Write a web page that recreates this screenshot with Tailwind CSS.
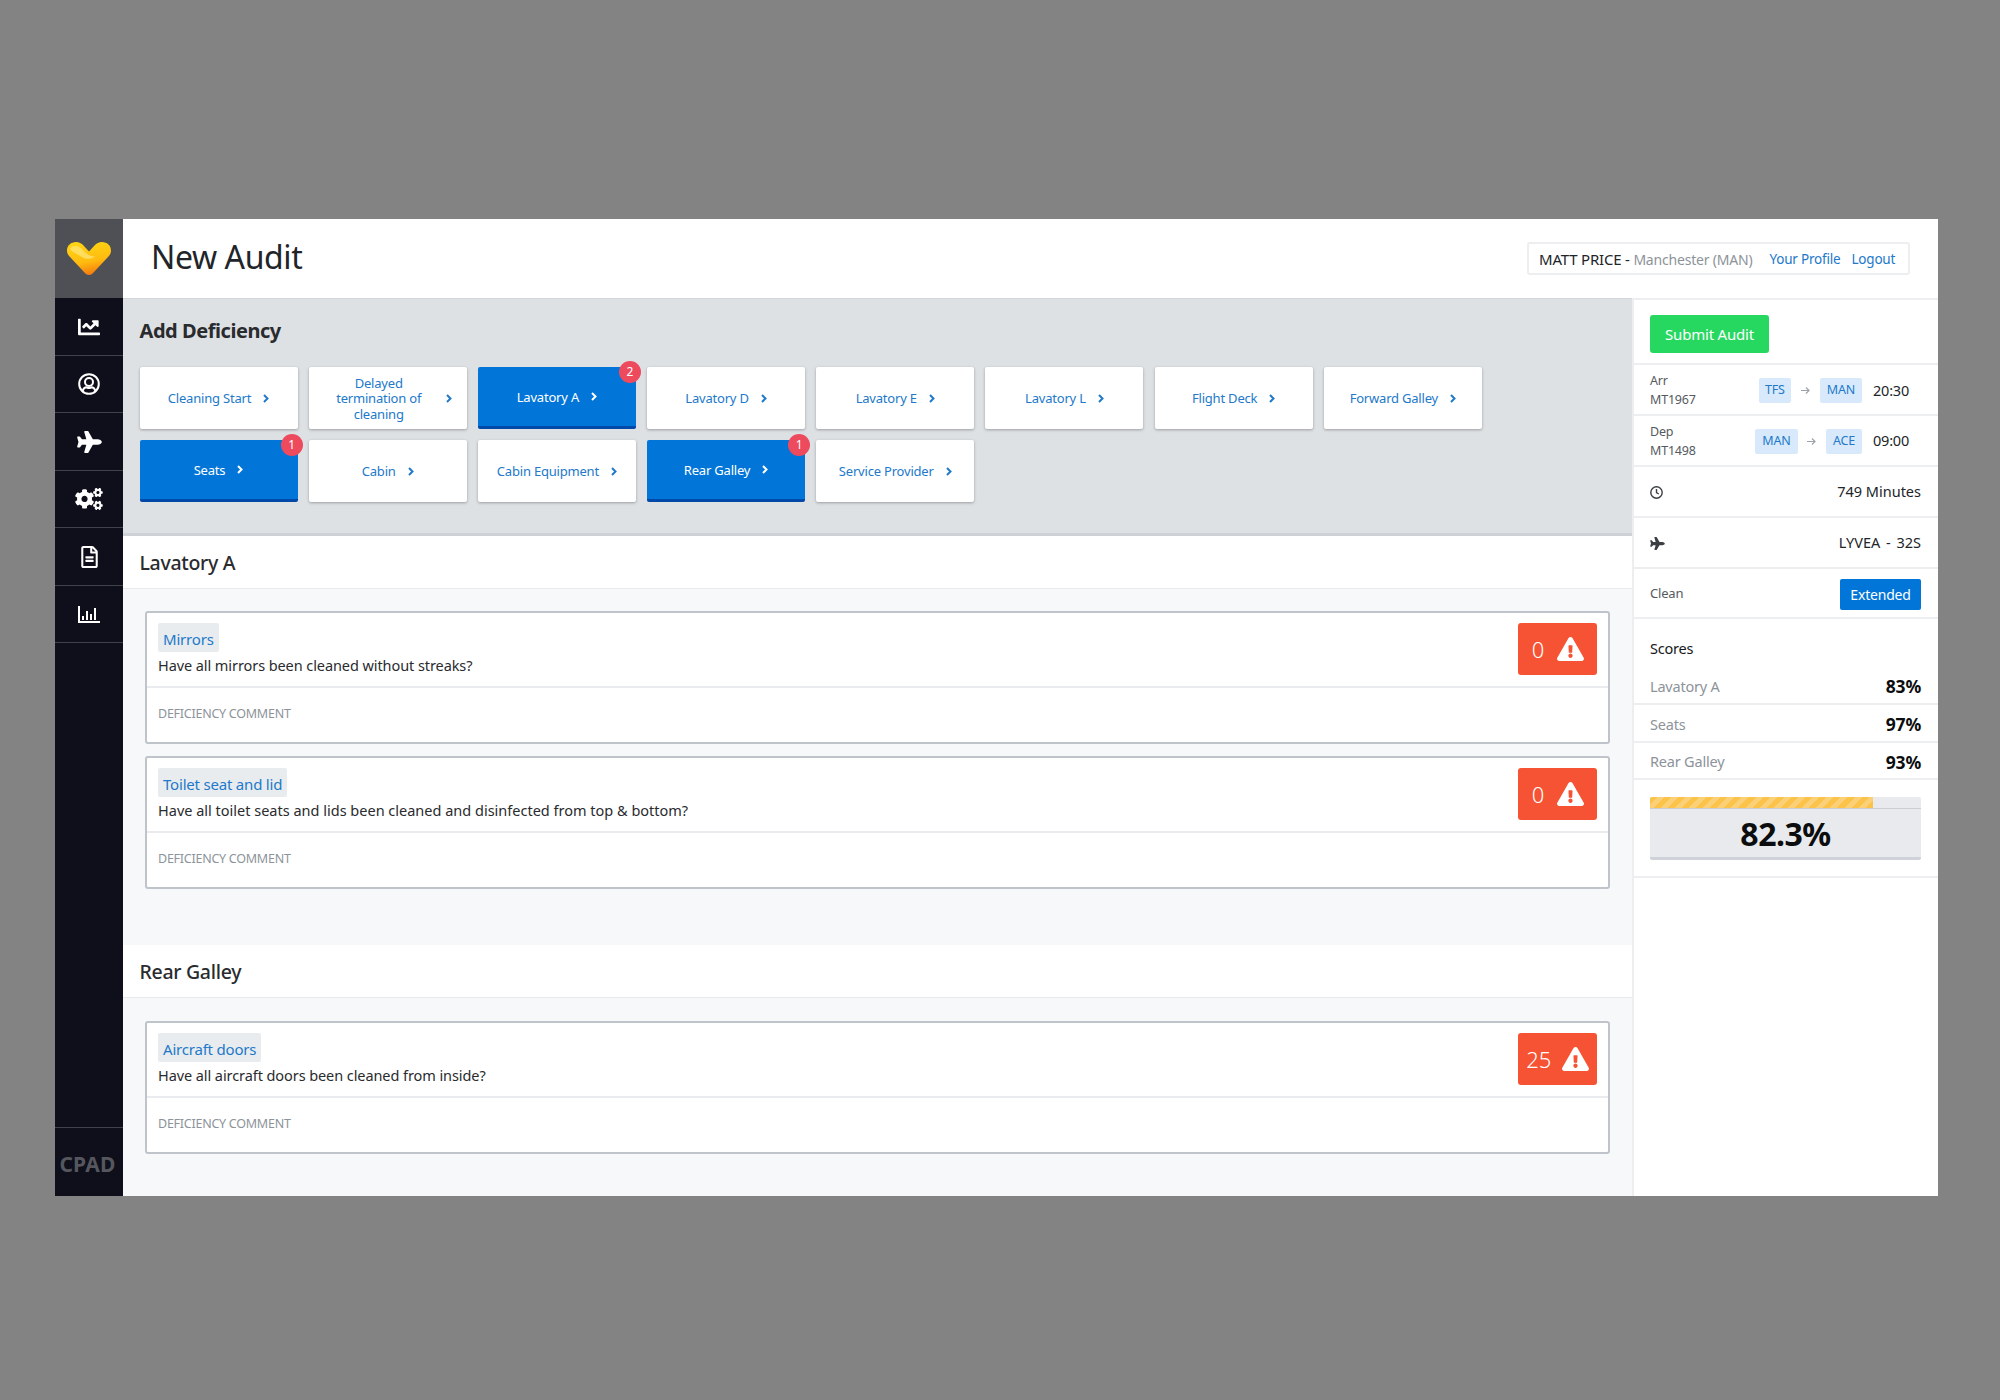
<!DOCTYPE html>
<html lang="en">
<head>
<meta charset="utf-8">
<title>New Audit</title>
<script src="https://cdn.jsdelivr.net/npm/@tailwindcss/browser@4"></script>
</head>
<body class="m-0 h-[1400px] w-[2000px] overflow-hidden bg-[#838383] pl-[55px] pt-[219px] font-['Noto_Sans','Open_Sans',sans-serif] text-[#212529]">
<div class="flex h-[977px] w-[1883px] bg-white">

  <!-- Sidebar -->
  <aside class="flex w-[68px] shrink-0 flex-col bg-[#0e0f1a] text-white">
    <div class="flex h-[79px] items-center justify-center bg-[#4e5056]">
      <svg class="h-[33px] w-[44px]" viewBox="0 0 44 33">
        <defs>
          <linearGradient id="hg" x1="0.3" y1="0" x2="0.55" y2="1"><stop offset="0" stop-color="#ffd513"/><stop offset="0.6" stop-color="#ffbb10"/><stop offset="1" stop-color="#f5780e"/></linearGradient>
        </defs>
        <path d="M22 33C20 33 18.500 32 17 30L3 15C1 13 0 11 0 8.500 0 3.500 4 0 9 0 12 0 14.500 1.500 16.500 3.500L22 9.500 27.500 3.500C29.500 1.500 32 0 35 0 40 0 44 3.500 44 8.500 44 11 43 13 41 15L27 30C25.500 32 24 33 22 33Z" fill="url(#hg)"/>
        <path d="M3 6.500C6 2.500 12 3.500 16 8c3 3.500 6 6.500 12 6.500-4 3.500-10 3-14 0C9.500 11.500 5.500 11 3 6.500z" fill="#ffe77e" opacity="0.7"/>
      </svg>
    </div>
    <a class="flex h-[57.5px] items-center justify-center border-b border-[#3f414b] pt-[1px]">
      <svg class="h-[22px] w-[22px]" viewBox="0 0 512 512" fill="#fff"><path d="M496 384H64V80c0-8.840-7.160-16-16-16H16C7.160 64 0 71.160 0 80v336c0 17.670 14.330 32 32 32h464c8.840 0 16-7.160 16-16v-32c0-8.840-7.160-16-16-16zM464 96H345.940c-21.380 0-32.090 25.850-16.970 40.970l32.400 32.400L288 242.750l-73.370-73.370c-12.500-12.500-32.760-12.500-45.250 0l-68.690 68.690c-6.250 6.250-6.250 16.380 0 22.630l22.620 22.620c6.250 6.250 16.380 6.250 22.630 0L192 237.250l73.370 73.370c12.500 12.500 32.760 12.500 45.250 0l96-96 32.400 32.400c15.120 15.120 40.970 4.410 40.970-16.970V112c.01-8.840-7.150-16-15.990-16z"/></svg>
    </a>
    <a class="flex h-[57.5px] items-center justify-center border-b border-[#3f414b] pt-[1px]">
      <svg class="h-[22px] w-[22px]" viewBox="0 0 22 22" fill="none" stroke="#fff" stroke-width="2"><circle cx="11" cy="11" r="9.800"/><circle cx="11" cy="9" r="4"/><path d="M4.500 18c1-2.700 3-3.700 4-3.700 1 .4 1.600.7 2.500.7s1.500-.3 2.500-.7c1 0 3 1 4 3.700"/></svg>
    </a>
    <a class="flex h-[57.5px] items-center justify-center border-b border-[#3f414b] pt-[1px]">
      <svg class="h-[22px] w-[25px]" viewBox="0 0 576 512" fill="#fff"><path d="M480 192H365.710L260.610 8.060A16.014 16.014 0 0 0 246.710 0h-65.500c-10.630 0-18.300 10.170-15.380 20.390L214.860 192H112l-43.200-57.600c-3.020-4.030-7.770-6.400-12.800-6.400H16.010C5.600 128-2.040 137.780.49 147.880L32 256 .49 364.120C-2.040 374.220 5.600 384 16.010 384H56c5.040 0 9.780-2.370 12.800-6.400L112 320h102.860l-49.030 171.600c-2.920 10.220 4.750 20.400 15.380 20.400h65.500c5.740 0 11.040-3.080 13.890-8.060L365.710 320H480c35.350 0 96-28.650 96-64s-60.650-64-96-64z"/></svg>
    </a>
    <a class="flex h-[57.5px] items-center justify-center border-b border-[#3f414b] pt-[1px]">
      <svg class="h-[22px] w-[28px]" viewBox="0 0 640 512" fill="#fff"><path d="M512.100 191l-8.200 14.300c-3 5.300-9.400 7.500-15.100 5.400-11.800-4.400-22.600-10.700-32.100-18.600-4.600-3.800-5.800-10.500-2.800-15.700l8.200-14.300c-6.900-8-12.300-17.300-15.900-27.400h-16.500c-6 0-11.200-4.300-12.200-10.300-2-12-2.100-24.600 0-37.100 1-6 6.200-10.400 12.200-10.400h16.500c3.600-10.100 9-19.400 15.900-27.400l-8.200-14.300c-3-5.200-1.900-11.900 2.800-15.700 9.500-7.900 20.400-14.200 32.100-18.600 5.700-2.100 12.100.1 15.100 5.400l8.200 14.300c10.500-1.900 21.200-1.900 31.700 0L552 6.300c3-5.300 9.400-7.500 15.100-5.400 11.800 4.400 22.600 10.700 32.100 18.600 4.600 3.800 5.800 10.500 2.800 15.700l-8.200 14.300c6.900 8 12.300 17.300 15.900 27.400h16.500c6 0 11.200 4.300 12.200 10.300 2 12 2.100 24.600 0 37.100-1 6-6.200 10.400-12.200 10.400h-16.500c-3.600 10.100-9 19.400-15.900 27.400l8.200 14.300c3 5.200 1.900 11.900-2.800 15.700-9.500 7.900-20.400 14.200-32.100 18.600-5.700 2.100-12.100-.1-15.100-5.400l-8.200-14.300c-10.400 1.900-21.200 1.900-31.700 0zm-10.500-58.800c38.500 29.600 82.400-14.300 52.800-52.800-38.500-29.700-82.400 14.300-52.800 52.800zM386.300 286.100l33.700 16.800c10.100 5.800 14.500 18.100 10.500 29.100-8.900 24.200-26.400 46.400-42.600 65.800-7.400 8.900-20.200 11.100-30.300 5.300l-29.100-16.800c-16 13.700-34.600 24.600-54.900 31.700v33.600c0 11.600-8.300 21.600-19.700 23.600-24.600 4.200-50.400 4.400-75.900 0-11.500-2-20-11.900-20-23.600V418c-20.300-7.200-38.900-18-54.900-31.700L74 403c-10 5.800-22.900 3.600-30.300-5.300-16.200-19.400-33.300-41.600-42.200-65.700-4-10.900.4-23.200 10.500-29.100l33.300-16.800c-3.900-20.900-3.900-42.400 0-63.400L12 205.800c-10.100-5.800-14.600-18.100-10.500-29 8.900-24.200 26-46.400 42.200-65.800 7.400-8.900 20.200-11.100 30.300-5.300l29.100 16.800c16-13.700 34.600-24.600 54.900-31.700V57.100c0-11.500 8.200-21.500 19.600-23.500 24.600-4.200 50.500-4.400 76-.1 11.500 2 20 11.900 20 23.600v33.600c20.300 7.200 38.900 18 54.900 31.700l29.100-16.800c10-5.800 22.900-3.600 30.300 5.300 16.200 19.400 33.200 41.600 42.100 65.800 4 10.900.1 23.200-10 29.100l-33.700 16.800c3.900 21 3.900 42.500 0 63.500zm-117.600 21.100c59.200-77-28.700-164.900-105.700-105.700-59.200 77 28.700 164.900 105.700 105.700zm243.400 182.700l-8.200 14.300c-3 5.300-9.400 7.500-15.100 5.400-11.800-4.400-22.600-10.700-32.100-18.600-4.600-3.800-5.800-10.500-2.800-15.700l8.200-14.300c-6.900-8-12.300-17.300-15.900-27.400h-16.500c-6 0-11.200-4.300-12.200-10.300-2-12-2.100-24.600 0-37.100 1-6 6.200-10.400 12.200-10.400h16.500c3.600-10.100 9-19.400 15.900-27.400l-8.200-14.300c-3-5.200-1.900-11.900 2.800-15.700 9.500-7.900 20.400-14.200 32.100-18.600 5.700-2.100 12.100.1 15.100 5.400l8.200 14.300c10.500-1.900 21.200-1.900 31.700 0l8.200-14.300c3-5.300 9.400-7.500 15.100-5.400 11.800 4.400 22.600 10.700 32.100 18.600 4.600 3.800 5.800 10.500 2.800 15.700l-8.200 14.300c6.900 8 12.300 17.300 15.900 27.400h16.500c6 0 11.200 4.300 12.200 10.300 2 12 2.100 24.600 0 37.100-1 6-6.200 10.400-12.200 10.400h-16.500c-3.600 10.100-9 19.400-15.900 27.400l8.200 14.300c3 5.200 1.900 11.900-2.800 15.700-9.500 7.900-20.400 14.200-32.100 18.600-5.700 2.100-12.100-.1-15.100-5.400l-8.200-14.300c-10.400 1.900-21.200 1.900-31.700 0zM501.600 431c38.500 29.600 82.400-14.300 52.800-52.800-38.500-29.600-82.400 14.300-52.800 52.800z"/></svg>
    </a>
    <a class="flex h-[57.5px] items-center justify-center border-b border-[#3f414b] pt-[1px]">
      <svg class="h-[22px] w-[17px]" viewBox="0 0 384 512" fill="#fff"><path d="M288 248v28c0 6.600-5.400 12-12 12H108c-6.600 0-12-5.400-12-12v-28c0-6.600 5.400-12 12-12h168c6.600 0 12 5.400 12 12zm-12 72H108c-6.600 0-12 5.400-12 12v28c0 6.600 5.400 12 12 12h168c6.600 0 12-5.400 12-12v-28c0-6.600-5.400-12-12-12zm108-188.100V464c0 26.500-21.500 48-48 48H48c-26.500 0-48-21.500-48-48V48C0 21.500 21.500 0 48 0h204.100C264.800 0 277 5.100 286 14.100L369.900 98c9 8.900 14.100 21.200 14.100 33.900zm-128-80V128h76.100L256 51.900zM336 464V176H232c-13.300 0-24-10.700-24-24V48H48v416h288z"/></svg>
    </a>
    <a class="flex h-[57.5px] items-center justify-center border-b border-[#3f414b] pt-[1px]">
      <svg class="h-[17px] w-[22px]" viewBox="0 0 22 17" fill="#fff"><path d="M0 0h2v15h20v2H0z"/><rect x="4" y="10" width="2" height="4"/><rect x="8" y="5" width="2" height="9"/><rect x="12" y="8" width="2" height="6"/><rect x="16" y="2" width="2" height="12"/></svg>
    </a>
    <div class="mt-auto flex h-[69px] items-center justify-center border-t border-[#3f414b] pr-[3px] pt-[6px] text-[21px] font-bold tracking-[0.2px] text-[#55565e]">CPAD</div>
  </aside>

  <!-- Main column -->
  <div class="flex min-w-0 flex-1 flex-col">
    <header class="flex h-[79px] shrink-0 items-center justify-between pb-[4px] pl-[28px] pr-[28px]">
      <h1 class="text-[32px] font-normal leading-none tracking-[-0.4px] text-[#212529]">New Audit</h1>
      <div class="mt-[4px] flex h-[33px] w-[383px] items-center rounded-[3px] border-2 border-[#eceef0] pl-[10px] pt-[1px] text-[14px] tracking-[-0.2px]">
        <span class="text-[15px] text-[#212529]">MATT PRICE -&nbsp;</span>
        <span class="text-[#8d939a]">Manchester (MAN)</span>
        <a class="ml-[17px] text-[13.500px] text-[#2279ca]">Your Profile</a>
        <a class="ml-[11px] text-[13.500px] text-[#2279ca]">Logout</a>
      </div>
    </header>

    <div class="flex min-h-0 flex-1">
      <!-- Content -->
      <main class="flex w-[1509px] shrink-0 flex-col bg-[#f7f8f9]">
        <section class="h-[238px] shrink-0 border-b-[3px] border-[#ced1d5] bg-[#dee1e4] pl-[16.500px] shadow-[inset_0_1px_0_#d2d5d9]">
          <h2 class="mb-[4px] flex h-[65px] items-center text-[20px] font-bold leading-none tracking-[-0.45px] text-[#292b2e]">Add Deficiency</h2>
          <div class="flex w-[1400px] flex-wrap gap-x-[11.200px] gap-y-[11px]">
            <a class="flex h-[62px] w-[158px] items-center justify-center gap-[12px] rounded-[2px] bg-white pt-[2px] text-center text-[13px] leading-[15.500px] tracking-[-0.2px] text-[#2279ca] shadow-[0_1px_3px_rgba(0,0,0,0.3)]"><span>Cleaning Start</span><svg class="mb-[2px] h-[9px] w-[6px]" viewBox="0 0 6 9" fill="none" stroke="currentColor" stroke-width="2"><path d="M1 1l3.500 3.500L1 8"/></svg></a>
            <a class="flex h-[62px] w-[158px] items-center justify-center gap-[12px] rounded-[2px] bg-white pt-[2px] text-center text-[13px] leading-[15.500px] tracking-[-0.2px] text-[#2279ca] shadow-[0_1px_3px_rgba(0,0,0,0.3)]"><span class="w-[110px]">Delayed termination of cleaning</span><svg class="mb-[2px] h-[9px] w-[6px]" viewBox="0 0 6 9" fill="none" stroke="currentColor" stroke-width="2"><path d="M1 1l3.500 3.500L1 8"/></svg></a>
            <a class="relative flex h-[62px] w-[158px] items-center justify-center gap-[12px] rounded-[2px] border-b-[3px] border-[#0049a8] bg-[#0275d8] pt-[2px] text-center text-[13px] leading-[15.500px] tracking-[-0.2px] text-white"><span>Lavatory A</span><svg class="mb-[2px] h-[9px] w-[6px]" viewBox="0 0 6 9" fill="none" stroke="currentColor" stroke-width="2"><path d="M1 1l3.500 3.500L1 8"/></svg><span class="absolute right-[-5px] top-[-6px] flex h-[22px] w-[22px] items-center justify-center rounded-full bg-[#ee4a5e] text-[12px]">2</span></a>
            <a class="flex h-[62px] w-[158px] items-center justify-center gap-[12px] rounded-[2px] bg-white pt-[2px] text-center text-[13px] leading-[15.500px] tracking-[-0.2px] text-[#2279ca] shadow-[0_1px_3px_rgba(0,0,0,0.3)]"><span>Lavatory D</span><svg class="mb-[2px] h-[9px] w-[6px]" viewBox="0 0 6 9" fill="none" stroke="currentColor" stroke-width="2"><path d="M1 1l3.500 3.500L1 8"/></svg></a>
            <a class="flex h-[62px] w-[158px] items-center justify-center gap-[12px] rounded-[2px] bg-white pt-[2px] text-center text-[13px] leading-[15.500px] tracking-[-0.2px] text-[#2279ca] shadow-[0_1px_3px_rgba(0,0,0,0.3)]"><span>Lavatory E</span><svg class="mb-[2px] h-[9px] w-[6px]" viewBox="0 0 6 9" fill="none" stroke="currentColor" stroke-width="2"><path d="M1 1l3.500 3.500L1 8"/></svg></a>
            <a class="flex h-[62px] w-[158px] items-center justify-center gap-[12px] rounded-[2px] bg-white pt-[2px] text-center text-[13px] leading-[15.500px] tracking-[-0.2px] text-[#2279ca] shadow-[0_1px_3px_rgba(0,0,0,0.3)]"><span>Lavatory L</span><svg class="mb-[2px] h-[9px] w-[6px]" viewBox="0 0 6 9" fill="none" stroke="currentColor" stroke-width="2"><path d="M1 1l3.500 3.500L1 8"/></svg></a>
            <a class="flex h-[62px] w-[158px] items-center justify-center gap-[12px] rounded-[2px] bg-white pt-[2px] text-center text-[13px] leading-[15.500px] tracking-[-0.2px] text-[#2279ca] shadow-[0_1px_3px_rgba(0,0,0,0.3)]"><span>Flight Deck</span><svg class="mb-[2px] h-[9px] w-[6px]" viewBox="0 0 6 9" fill="none" stroke="currentColor" stroke-width="2"><path d="M1 1l3.500 3.500L1 8"/></svg></a>
            <a class="flex h-[62px] w-[158px] items-center justify-center gap-[12px] rounded-[2px] bg-white pt-[2px] text-center text-[13px] leading-[15.500px] tracking-[-0.2px] text-[#2279ca] shadow-[0_1px_3px_rgba(0,0,0,0.3)]"><span>Forward Galley</span><svg class="mb-[2px] h-[9px] w-[6px]" viewBox="0 0 6 9" fill="none" stroke="currentColor" stroke-width="2"><path d="M1 1l3.500 3.500L1 8"/></svg></a>
            <a class="relative flex h-[62px] w-[158px] items-center justify-center gap-[12px] rounded-[2px] border-b-[3px] border-[#0049a8] bg-[#0275d8] pt-[2px] text-center text-[13px] leading-[15.500px] tracking-[-0.2px] text-white"><span>Seats</span><svg class="mb-[2px] h-[9px] w-[6px]" viewBox="0 0 6 9" fill="none" stroke="currentColor" stroke-width="2"><path d="M1 1l3.500 3.500L1 8"/></svg><span class="absolute right-[-5px] top-[-6px] flex h-[22px] w-[22px] items-center justify-center rounded-full bg-[#ee4a5e] text-[12px]">1</span></a>
            <a class="flex h-[62px] w-[158px] items-center justify-center gap-[12px] rounded-[2px] bg-white pt-[2px] text-center text-[13px] leading-[15.500px] tracking-[-0.2px] text-[#2279ca] shadow-[0_1px_3px_rgba(0,0,0,0.3)]"><span>Cabin</span><svg class="mb-[2px] h-[9px] w-[6px]" viewBox="0 0 6 9" fill="none" stroke="currentColor" stroke-width="2"><path d="M1 1l3.500 3.500L1 8"/></svg></a>
            <a class="flex h-[62px] w-[158px] items-center justify-center gap-[12px] rounded-[2px] bg-white pt-[2px] text-center text-[13px] leading-[15.500px] tracking-[-0.2px] text-[#2279ca] shadow-[0_1px_3px_rgba(0,0,0,0.3)]"><span>Cabin Equipment</span><svg class="mb-[2px] h-[9px] w-[6px]" viewBox="0 0 6 9" fill="none" stroke="currentColor" stroke-width="2"><path d="M1 1l3.500 3.500L1 8"/></svg></a>
            <a class="relative flex h-[62px] w-[158px] items-center justify-center gap-[12px] rounded-[2px] border-b-[3px] border-[#0049a8] bg-[#0275d8] pt-[2px] text-center text-[13px] leading-[15.500px] tracking-[-0.2px] text-white"><span>Rear Galley</span><svg class="mb-[2px] h-[9px] w-[6px]" viewBox="0 0 6 9" fill="none" stroke="currentColor" stroke-width="2"><path d="M1 1l3.500 3.500L1 8"/></svg><span class="absolute right-[-5px] top-[-6px] flex h-[22px] w-[22px] items-center justify-center rounded-full bg-[#ee4a5e] text-[12px]">1</span></a>
            <a class="flex h-[62px] w-[158px] items-center justify-center gap-[12px] rounded-[2px] bg-white pt-[2px] text-center text-[13px] leading-[15.500px] tracking-[-0.2px] text-[#2279ca] shadow-[0_1px_3px_rgba(0,0,0,0.3)]"><span>Service Provider</span><svg class="mb-[2px] h-[9px] w-[6px]" viewBox="0 0 6 9" fill="none" stroke="currentColor" stroke-width="2"><path d="M1 1l3.500 3.500L1 8"/></svg></a>
          </div>
        </section>

        <!-- Lavatory A -->
        <h3 class="flex h-[53px] shrink-0 items-center border-b border-[#e8eaec] bg-white pl-[16.500px] pt-[2px] text-[19.500px] font-medium tracking-[-0.3px] text-[#292b2e]">Lavatory A</h3>
        <div class="flex h-[356px] shrink-0 flex-col gap-[12px] pl-[22px] pr-[22px] pt-[22px]">
          <article class="flex h-[133px] flex-col rounded-[3px] border-2 border-[#bfc3ca] bg-white">
            <div class="flex h-[75px] shrink-0 justify-between border-b-2 border-[#e9ebee] pl-[11px] pr-[11px] pt-[10px]">
              <div>
                <span class="block h-[29px] w-fit rounded-[2px] bg-[#e9ecef] px-[5px] pt-[3px] text-[15px] leading-[26px] tracking-[-0.2px] text-[#2279ca]">Mirrors</span>
                <p class="mt-[2px] text-[14.500px] leading-[22px] tracking-[-0.08px] text-[#292b2e]">Have all mirrors been cleaned without streaks?</p>
              </div>
              <div class="flex h-[52px] w-[79px] items-center justify-center gap-[13px] rounded-[3px] bg-[#f55333] pl-[1px] text-[22px] font-light text-white">
                <span>0</span>
                <svg class="h-[24px] w-[27px]" viewBox="0 0 576 512" fill="#fff"><path d="M569.517 440.013C587.975 472.007 564.806 512 527.940 512H48.054c-36.937 0-59.999-40.055-41.577-71.987L246.423 23.985c18.467-32.009 64.720-31.951 83.154 0l239.940 416.028zM288 354c-25.405 0-46 20.595-46 46s20.595 46 46 46 46-20.595 46-46-20.595-46-46-46zm-43.673-165.346l7.418 136c.347 6.364 5.609 11.346 11.982 11.346h48.546c6.373 0 11.635-4.982 11.982-11.346l7.418-136c.375-6.874-5.098-12.654-11.982-12.654h-63.383c-6.884 0-12.356 5.780-11.981 12.654z"/></svg>
              </div>
            </div>
            <p class="pl-[11px] pt-[17px] text-[12.500px] leading-[18px] tracking-[-0.25px] text-[#8d939a]">DEFICIENCY COMMENT</p>
          </article>
          <article class="flex h-[133px] flex-col rounded-[3px] border-2 border-[#bfc3ca] bg-white">
            <div class="flex h-[75px] shrink-0 justify-between border-b-2 border-[#e9ebee] pl-[11px] pr-[11px] pt-[10px]">
              <div>
                <span class="block h-[29px] w-fit rounded-[2px] bg-[#e9ecef] px-[5px] pt-[3px] text-[15px] leading-[26px] tracking-[-0.2px] text-[#2279ca]">Toilet seat and lid</span>
                <p class="mt-[2px] text-[14.500px] leading-[22px] text-[#292b2e]">Have all toilet seats and lids been cleaned and disinfected from top &amp; bottom?</p>
              </div>
              <div class="flex h-[52px] w-[79px] items-center justify-center gap-[13px] rounded-[3px] bg-[#f55333] pl-[1px] text-[22px] font-light text-white">
                <span>0</span>
                <svg class="h-[24px] w-[27px]" viewBox="0 0 576 512" fill="#fff"><path d="M569.517 440.013C587.975 472.007 564.806 512 527.940 512H48.054c-36.937 0-59.999-40.055-41.577-71.987L246.423 23.985c18.467-32.009 64.720-31.951 83.154 0l239.940 416.028zM288 354c-25.405 0-46 20.595-46 46s20.595 46 46 46 46-20.595 46-46-20.595-46-46-46zm-43.673-165.346l7.418 136c.347 6.364 5.609 11.346 11.982 11.346h48.546c6.373 0 11.635-4.982 11.982-11.346l7.418-136c.375-6.874-5.098-12.654-11.982-12.654h-63.383c-6.884 0-12.356 5.780-11.981 12.654z"/></svg>
              </div>
            </div>
            <p class="pl-[11px] pt-[17px] text-[12.500px] leading-[18px] tracking-[-0.25px] text-[#8d939a]">DEFICIENCY COMMENT</p>
          </article>
        </div>

        <!-- Rear Galley -->
        <h3 class="flex h-[53px] shrink-0 items-center border-b border-[#e8eaec] bg-white pl-[16.500px] pt-[2px] text-[19.500px] font-medium tracking-[-0.3px] text-[#292b2e]">Rear Galley</h3>
        <div class="flex flex-1 flex-col pl-[22px] pr-[22px] pt-[23px]">
          <article class="flex h-[133px] flex-col rounded-[3px] border-2 border-[#bfc3ca] bg-white">
            <div class="flex h-[75px] shrink-0 justify-between border-b-2 border-[#e9ebee] pl-[11px] pr-[11px] pt-[10px]">
              <div>
                <span class="block h-[29px] w-fit rounded-[2px] bg-[#e9ecef] px-[5px] pt-[3px] text-[15px] leading-[26px] tracking-[-0.2px] text-[#2279ca]">Aircraft doors</span>
                <p class="mt-[2px] text-[14.500px] leading-[22px] tracking-[-0.08px] text-[#292b2e]">Have all aircraft doors been cleaned from inside?</p>
              </div>
              <div class="flex h-[52px] w-[79px] items-center justify-center gap-[10.500px] rounded-[3px] bg-[#f55333] text-[22px] font-light text-white">
                <span>25</span>
                <svg class="h-[24px] w-[27px]" viewBox="0 0 576 512" fill="#fff"><path d="M569.517 440.013C587.975 472.007 564.806 512 527.940 512H48.054c-36.937 0-59.999-40.055-41.577-71.987L246.423 23.985c18.467-32.009 64.720-31.951 83.154 0l239.940 416.028zM288 354c-25.405 0-46 20.595-46 46s20.595 46 46 46 46-20.595 46-46-20.595-46-46-46zm-43.673-165.346l7.418 136c.347 6.364 5.609 11.346 11.982 11.346h48.546c6.373 0 11.635-4.982 11.982-11.346l7.418-136c.375-6.874-5.098-12.654-11.982-12.654h-63.383c-6.884 0-12.356 5.780-11.981 12.654z"/></svg>
              </div>
            </div>
            <p class="pl-[11px] pt-[17px] text-[12.500px] leading-[18px] tracking-[-0.25px] text-[#8d939a]">DEFICIENCY COMMENT</p>
          </article>
        </div>
      </main>

      <!-- Right panel -->
      <aside class="flex flex-1 flex-col border-l-2 border-t-2 border-[#eceef0] bg-white text-[14.500px]">
        <div class="h-[65px] shrink-0 border-b-2 border-[#eceef0] pl-[16px] pt-[15px]">
          <a class="flex h-[38px] w-[119px] items-center justify-center rounded-[3px] bg-[#26d85f] pt-[1px] text-[15px] tracking-[-0.2px] text-white">Submit Audit</a>
        </div>
        <div class="flex h-[50.900px] shrink-0 items-center border-b-2 border-[#eceef0] pl-[16px] pr-[29px] pt-[2px]">
          <div class="text-[12.500px] leading-[19px] tracking-[-0.2px] text-[#555a60]">Arr<br>MT1967</div>
          <div class="ml-auto flex items-center text-[12.500px] tracking-[-0.2px] text-[#2279ca]">
            <span class="flex h-[25px] w-[32px] items-center justify-center rounded-[2px] bg-[#d7e9fa]">TFS</span>
            <svg class="mx-[10px] h-[9px] w-[9px]" viewBox="0 0 9 9" fill="none" stroke="#9ea3a9" stroke-width="1.200"><path d="M0 4.500h8M5 1.500l3 3-3 3"/></svg>
            <span class="flex h-[25px] w-[42px] items-center justify-center rounded-[2px] bg-[#d7e9fa]">MAN</span>
          </div>
          <span class="ml-[11px] tracking-[-0.2px] text-[#212529]">20:30</span>
        </div>
        <div class="flex h-[50.900px] shrink-0 items-center border-b-2 border-[#eceef0] pl-[16px] pr-[29px] pt-[2px]">
          <div class="text-[12.500px] leading-[19px] tracking-[-0.2px] text-[#555a60]">Dep<br>MT1498</div>
          <div class="ml-auto flex items-center text-[12.500px] tracking-[-0.2px] text-[#2279ca]">
            <span class="flex h-[25px] w-[43px] items-center justify-center rounded-[2px] bg-[#d7e9fa]">MAN</span>
            <svg class="mx-[9.500px] h-[9px] w-[9px]" viewBox="0 0 9 9" fill="none" stroke="#9ea3a9" stroke-width="1.200"><path d="M0 4.500h8M5 1.500l3 3-3 3"/></svg>
            <span class="flex h-[25px] w-[36px] items-center justify-center rounded-[2px] bg-[#d7e9fa]">ACE</span>
          </div>
          <span class="ml-[11px] tracking-[-0.2px] text-[#212529]">09:00</span>
        </div>
        <div class="flex h-[50.900px] shrink-0 items-center justify-between border-b-2 border-[#eceef0] pl-[16px] pr-[17px] pt-[2px]">
          <svg class="h-[13px] w-[13px]" viewBox="0 0 13 13" fill="none" stroke="#3b3f44" stroke-width="1.400"><circle cx="6.500" cy="6.500" r="5.700"/><path d="M6.500 3v3.700l2.300 1.300"/></svg>
          <span>749 Minutes</span>
        </div>
        <div class="flex h-[50.900px] shrink-0 items-center justify-between border-b-2 border-[#eceef0] pl-[16px] pr-[17px] pt-[2px]">
          <svg class="h-[13px] w-[15px]" viewBox="0 0 576 512" fill="#3b3f44"><path d="M480 192H365.710L260.610 8.060A16.014 16.014 0 0 0 246.710 0h-65.500c-10.630 0-18.300 10.170-15.380 20.390L214.860 192H112l-43.200-57.600c-3.020-4.030-7.770-6.400-12.800-6.400H16.010C5.600 128-2.040 137.780.49 147.880L32 256 .49 364.120C-2.040 374.220 5.600 384 16.010 384H56c5.040 0 9.780-2.370 12.800-6.400L112 320h102.860l-49.030 171.600c-2.920 10.220 4.750 20.400 15.380 20.400h65.500c5.740 0 11.040-3.080 13.890-8.060L365.710 320H480c35.350 0 96-28.650 96-64s-60.650-64-96-64z"/></svg>
          <span class="[word-spacing:2px]">LYVEA - 32S</span>
        </div>
        <div class="flex h-[50.900px] shrink-0 items-center justify-between border-b-2 border-[#eceef0] pl-[16px] pr-[17px] pt-[2px]">
          <span class="text-[13px] tracking-[-0.2px] text-[#555a60]">Clean</span>
          <a class="flex h-[31px] w-[81px] items-center justify-center rounded-[2px] bg-[#0275d8] text-[14px] tracking-[-0.2px] text-white">Extended</a>
        </div>
        <div class="flex h-[45px] shrink-0 items-end pb-[5px] pl-[16px] tracking-[-0.2px] text-[#16181a]">Scores</div>
        <div class="flex h-[41px] shrink-0 items-center justify-between border-b-2 border-[#eceef0] pl-[16px] pr-[17px] pt-[5px] tracking-[-0.2px]"><span class="text-[#8d939a]">Lavatory A</span><span class="text-[17.500px] font-bold text-[#0c0d0e]">83%</span></div>
        <div class="flex h-[38px] shrink-0 items-center justify-between border-b-2 border-[#eceef0] pl-[16px] pr-[17px] pt-[2px] tracking-[-0.2px]"><span class="text-[#8d939a]">Seats</span><span class="text-[17.500px] font-bold text-[#0c0d0e]">97%</span></div>
        <div class="flex h-[37px] shrink-0 items-center justify-between border-b-2 border-[#eceef0] pl-[16px] pr-[17px] pt-[2px] tracking-[-0.2px]"><span class="text-[#8d939a]">Rear Galley</span><span class="text-[17.500px] font-bold text-[#0c0d0e]">93%</span></div>
        <div class="h-[98px] shrink-0 border-b-2 border-[#eceef0] pl-[16px] pr-[17px] pt-[17px]">
          <div class="h-[63px] overflow-hidden rounded-[2px] border-b-[3px] border-[#cfd2d9] bg-[#e8eaed]">
            <div class="h-[12px] border-b border-[#ccced1]"><div class="h-[11px] bg-[repeating-linear-gradient(135deg,#fbc34a_0,#fbc34a_5px,#fcd077_5px,#fcd077_10px)]" style="width:82.300%"></div></div>
            <div class="flex h-[48px] items-center justify-center pt-[2px] text-[32px] font-bold leading-none tracking-[-0.5px] text-[#0c0d0e]">82.3%</div>
          </div>
        </div>
      </aside>
    </div>
  </div>
</div>
</body>
</html>
